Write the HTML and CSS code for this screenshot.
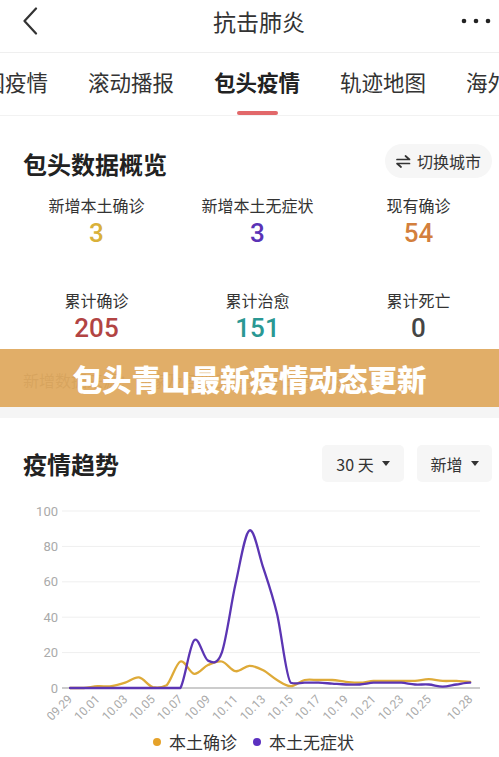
FILE: index.html
```html
<!DOCTYPE html>
<html lang="zh-CN">
<head>
<meta charset="utf-8">
<title>抗击肺炎</title>
<link rel="stylesheet" href="styles.css">
</head>
<body>
<div class="page">
  <header class="topbar">
    <div class="topbar-left">
      <svg class="back" width="16" height="28" viewBox="0 0 16 28"><path d="M14 1.5 L2.5 14 L14 26.5" fill="none" stroke="#333" stroke-width="2.2" stroke-linecap="round" stroke-linejoin="round"/></svg>
    </div>
    <div class="topbar-title">抗击肺炎</div>
    <div class="topbar-right">
      <svg width="32" height="6" viewBox="0 0 32 6"><circle cx="4" cy="3" r="2.3" fill="#222"/><circle cx="16" cy="3" r="2.3" fill="#222"/><circle cx="28" cy="3" r="2.3" fill="#222"/></svg>
    </div>
  </header>

  <nav class="tabs">
    <div class="tab">全国疫情</div>
    <div class="tab">滚动播报</div>
    <div class="tab active">包头疫情</div>
    <div class="tab">轨迹地图</div>
    <div class="tab">海外疫情</div>
  </nav>

  <section class="overview">
    <div class="overview-head">
      <h2 class="section-title">包头数据概览</h2>
      <div class="switch-btn">
        <svg class="switch-icon" width="15" height="13" viewBox="0 0 15 13"><path d="M1 4.5 H13.5 L9.5 1" fill="none" stroke="#333" stroke-width="1.7" stroke-linecap="round" stroke-linejoin="round"/><path d="M13.5 8.5 H1 L5 12" fill="none" stroke="#333" stroke-width="1.7" stroke-linecap="round" stroke-linejoin="round"/></svg>
        <span>切换城市</span>
      </div>
    </div>
    <div class="stats">
      <div class="stat"><div class="stat-label">新增本土确诊</div><div class="stat-num c-yellow">3</div></div>
      <div class="stat"><div class="stat-label">新增本土无症状</div><div class="stat-num c-purple">3</div></div>
      <div class="stat"><div class="stat-label">现有确诊</div><div class="stat-num c-orange">54</div></div>
      <div class="stat row2"><div class="stat-label">累计确诊</div><div class="stat-num c-red">205</div></div>
      <div class="stat row2"><div class="stat-label">累计治愈</div><div class="stat-num c-teal">151</div></div>
      <div class="stat row2"><div class="stat-label">累计死亡</div><div class="stat-num c-gray">0</div></div>
    </div>
    <div class="source">新增数据来源：国家及各地卫健委每日信息发布</div>
    <div class="banner">包头青山最新疫情动态更新</div>
  </section>

  <div class="separator"></div>

  <section class="trend">
    <div class="trend-head">
      <h2 class="section-title">疫情趋势</h2>
      <div class="filters">
        <div class="filter">30 天<span class="caret"></span></div>
        <div class="filter">新增<span class="caret"></span></div>
      </div>
    </div>
    <svg class="chart" width="499" height="235" viewBox="0 0 499 235">
      <g stroke="#efefef" stroke-width="1">
        <line x1="62" y1="16" x2="480" y2="16"/>
        <line x1="62" y1="51.4" x2="480" y2="51.4"/>
        <line x1="62" y1="86.8" x2="480" y2="86.8"/>
        <line x1="62" y1="122.2" x2="480" y2="122.2"/>
        <line x1="62" y1="157.6" x2="480" y2="157.6"/>
      </g>
      <line x1="62" y1="193" x2="480" y2="193" stroke="#999" stroke-width="1"/>
      <g class="ylabels" text-anchor="end">
        <text x="58" y="20.5">100</text>
        <text x="58" y="55.9">80</text>
        <text x="58" y="91.3">60</text>
        <text x="58" y="126.7">40</text>
        <text x="58" y="162.1">20</text>
        <text x="58" y="197.5">0</text>
      </g>
      <g class="xlabels" text-anchor="end">
        <text x="73" y="205" transform="rotate(-45 73 205)">09.29</text>
        <text x="100.6" y="205" transform="rotate(-45 100.6 205)">10.01</text>
        <text x="128.2" y="205" transform="rotate(-45 128.2 205)">10.03</text>
        <text x="155.8" y="205" transform="rotate(-45 155.8 205)">10.05</text>
        <text x="183.4" y="205" transform="rotate(-45 183.4 205)">10.07</text>
        <text x="211" y="205" transform="rotate(-45 211 205)">10.09</text>
        <text x="238.6" y="205" transform="rotate(-45 238.6 205)">10.11</text>
        <text x="266.2" y="205" transform="rotate(-45 266.2 205)">10.13</text>
        <text x="293.8" y="205" transform="rotate(-45 293.8 205)">10.15</text>
        <text x="321.4" y="205" transform="rotate(-45 321.4 205)">10.17</text>
        <text x="349" y="205" transform="rotate(-45 349 205)">10.19</text>
        <text x="376.6" y="205" transform="rotate(-45 376.6 205)">10.21</text>
        <text x="404.2" y="205" transform="rotate(-45 404.2 205)">10.23</text>
        <text x="431.8" y="205" transform="rotate(-45 431.8 205)">10.25</text>
        <text x="473.2" y="205" transform="rotate(-45 473.2 205)">10.28</text>
      </g>
      <path class="line-yellow" d="M70,193 L83.8,193 C88.4,192.7 93,191.5 97.6,191.2 C102.2,190.9 106.8,191.8 111.4,191.2 C116,190.6 120.6,189.2 125.2,187.7 C129.8,186.2 134.4,181.7 139,182.4 C143.6,183.1 148.2,190.8 152.8,192.1 C157.4,193.2 162,192.5 166.6,190.3 C171.2,186 175.8,168.4 180.4,166.5 C185,164.6 189.6,178.2 194.2,178.8 C198.8,179.4 203.4,172.05 208,170 C212.6,167.950 217.2,165.5 221.8,166.5 C226.4,167.5 231,175.5 235.6,176.2 C240.2,176.9 244.8,171.05 249.4,170.9 C254,170.75 258.6,172.95 263.2,175.3 C267.8,177.65 272.4,182.35 277,185 C281.6,187.65 286.2,191.2 290.8,191.2 C295.4,191.2 300,186 304.6,185 C309.2,184 313.8,185 318.4,185 C323,185 327.6,184.7 332.2,185 C336.8,185.3 341.4,186.35 346,186.8 C350.6,187.25 355.2,187.85 359.8,187.7 C364.4,187.55 369,186.2 373.6,185.9 C378.2,185.6 382.8,185.9 387.4,185.9 L415,185.9 C419.6,185.6 424.2,184.2 428.8,184.2 C433.4,184.2 438,185.6 442.6,185.9 C447.2,186.2 451.8,185.75 456.4,185.9 C461,186.05 465.6,186.8 470.2,186.8"/>
      <path class="line-purple" d="M70,193 L166.6,193 C171.2,193 175.8,193 180.4,193 C185,185 189.6,149.8 194.2,145.2 C198.8,140.6 203.4,163.5 208,165.6 C212.6,167.7 217.2,170.4 221.8,157.6 C226.4,144.8 231,109 235.6,88.6 C240.2,68.2 244.8,38.2 249.4,35.5 C254,32.8 258.6,58.7 263.2,72.6 C267.8,86.5 272.4,99.5 277,118.7 C281.6,137.9 286.2,184.5 290.8,187.7 C295.4,189.5 300,187.7 304.6,187.7 L318.4,187.7 C323,187.85 327.6,188.3 332.2,188.6 C336.8,188.9 341.4,189.35 346,189.5 C350.6,189.65 355.2,189.8 359.8,189.5 C364.4,189.2 369,188 373.6,187.7 C378.2,187.4 382.8,187.7 387.4,187.7 C392,187.7 396.6,187.4 401.2,187.7 C405.8,188 410.4,189.2 415,189.5 C419.6,189.8 424.2,189.15 428.8,189.5 C433.4,189.85 438,191.6 442.6,191.6 C447.2,191.6 451.8,190.15 456.4,189.5 C461,188.85 465.6,187.7 470.2,187.7"/>
    </svg>
    <div class="legend">
      <div class="legend-item"><span class="dot dot-yellow"></span>本土确诊</div>
      <div class="legend-item"><span class="dot dot-purple"></span>本土无症状</div>
    </div>
  </section>
</div>
</body>
</html>
```

FILE: styles.css
```css
* { box-sizing: border-box; }
html, body {
  margin: 0;
  padding: 0;
  background: #fff;
}
body {
  font-family: "Noto Sans CJK SC", "Noto Sans", sans-serif;
  color: #333;
  overflow: hidden;
}
.page {
  width: 499px;
  overflow: hidden;
}

/* top bar */
.topbar {
  display: flex;
  height: 53px;
  padding-bottom: 11px;
  border-bottom: 1px solid #efefef;
}
.topbar-left {
  width: 80px;
  display: flex;
  align-items: center;
  padding-left: 22px;
}
.back { display: block; }
.topbar-title {
  flex: 1;
  text-align: center;
  font-size: 23px;
  line-height: 42px;
  color: #333;
}
.topbar-right {
  width: 61px;
  display: flex;
  align-items: center;
  padding-left: 22px;
}
.topbar-right svg { display: block; }

/* tabs */
.tabs {
  display: flex;
  gap: 40px;
  margin-left: -38px;
  height: 63px;
  border-bottom: 1px solid #f2f2f2;
  white-space: nowrap;
}
.tab {
  position: relative;
  flex: none;
  width: 86px;
  font-size: 21.5px;
  line-height: 30px;
  padding-top: 14px;
  color: #333;
}
.tab.active {
  font-weight: 700;
  color: #222;
}
.tab.active::after {
  content: "";
  position: absolute;
  left: calc(50% - 20.5px);
  top: 58px;
  width: 41px;
  height: 4px;
  border-radius: 2px;
  background: #e2686a;
}

/* overview */
.overview {
  position: relative;
  padding-top: 28px;
  padding-bottom: 16px;
}
.overview-head, .trend-head {
  display: flex;
  align-items: center;
  justify-content: space-between;
  padding-left: 23px;
  padding-right: 7px;
}
.section-title {
  margin: 0;
  font-size: 24px;
  font-weight: 700;
  color: #222;
  line-height: 34px;
}
.overview-head .section-title {
  line-height: 28px;
  margin-top: 6px;
}
.switch-btn {
  display: flex;
  align-items: center;
  gap: 6px;
  height: 34px;
  padding: 0 11px 0 11px;
  border-radius: 17px;
  background: #f6f6f6;
  font-size: 16px;
  color: #333;
}
.switch-icon { display: block; }

.stats {
  display: grid;
  grid-template-columns: repeat(3, 1fr);
  padding-left: 16px;
  margin-top: 16px;
}
.stat {
  text-align: center;
}
.stat.row2 { margin-top: 39px; }
.stat-label {
  font-size: 16px;
  line-height: 22px;
  color: #333;
}
.stat-num {
  font-family: Roboto, "Noto Sans", sans-serif;
  font-size: 26px;
  font-weight: 500;
  line-height: 34px;
}
.c-yellow { color: #d9b13a; }
.c-purple { color: #5a33b6; }
.c-orange { color: #d37f3d; }
.c-red { color: #b24443; }
.c-teal { color: #2a9893; }
.c-gray { color: #454545; }

.source {
  margin-top: 24px;
  padding-left: 23px;
  font-size: 16px;
  line-height: 22px;
  color: #999;
  white-space: nowrap;
  overflow: hidden;
}
.banner {
  position: absolute;
  left: 0;
  right: 0;
  bottom: 0;
  height: 58px;
  background: rgba(222, 165, 88, 0.9);
  color: #fff;
  text-align: center;
  font-size: 29.5px;
  font-weight: 900;
  line-height: 58px;
  letter-spacing: 0;
}

.separator {
  height: 11px;
  background: #f5f5f5;
}

/* trend */
.trend {
  padding-top: 27px;
}
.filters {
  display: flex;
  gap: 13px;
}
.filter {
  display: flex;
  align-items: center;
  justify-content: center;
  gap: 8px;
  height: 37px;
  border-radius: 5px;
  background: #f6f6f6;
  font-size: 16px;
  color: #333;
}
.filter:first-child { width: 82px; }
.filter:last-child { width: 75px; }
.caret {
  width: 0;
  height: 0;
  border-left: 4px solid transparent;
  border-right: 4px solid transparent;
  border-top: 5px solid #333;
}

.chart {
  display: block;
  margin-top: 13px;
}
.ylabels text {
  font-family: Roboto, "Noto Sans", sans-serif;
  font-size: 13px;
  fill: #aaa;
}
.xlabels text {
  font-family: Roboto, "Noto Sans", sans-serif;
  font-size: 12px;
  fill: #aaa;
}
.line-yellow {
  fill: none;
  stroke: #deaa38;
  stroke-width: 2.3;
  stroke-linejoin: round;
  stroke-linecap: round;
}
.line-purple {
  fill: none;
  stroke: #5b35b3;
  stroke-width: 2.3;
  stroke-linejoin: round;
  stroke-linecap: round;
}

.legend {
  display: flex;
  justify-content: center;
  gap: 16px;
  font-size: 17px;
  line-height: 24px;
  color: #333;
  padding-left: 8px;
}
.legend-item {
  display: flex;
  align-items: center;
  gap: 8px;
}
.dot {
  width: 8px;
  height: 8px;
  border-radius: 50%;
}
.dot-yellow { background: #e5a22a; }
.dot-purple { background: #5b30c0; }
```
